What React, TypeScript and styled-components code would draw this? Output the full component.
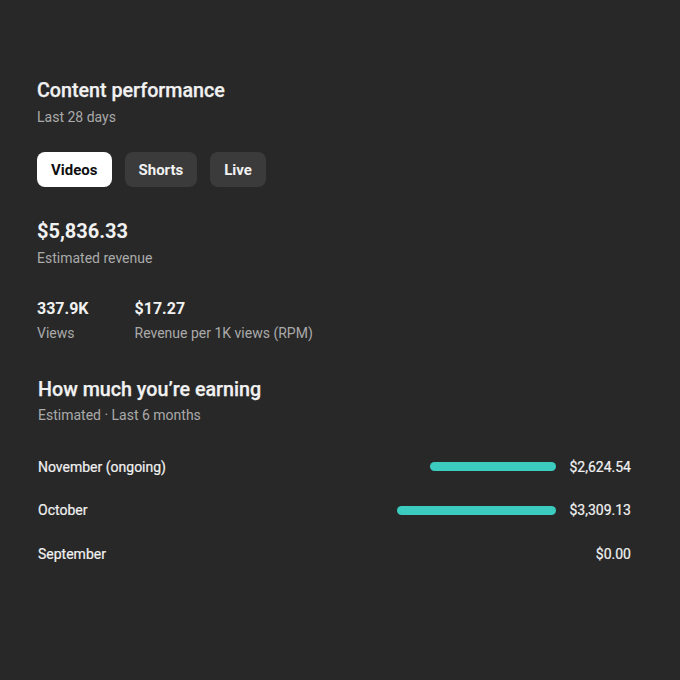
import React from 'react';
import styled, { createGlobalStyle } from 'styled-components';

const GlobalStyle = createGlobalStyle`
  html, body {
    margin: 0;
    padding: 0;
    background: #282828;
  }
  body {
    font-family: Roboto, "Noto Sans", Arial, sans-serif;
    color: #f1f1f1;
  }
`;

type Month = {
  label: string;
  amount: number;
};

const months: Month[] = [
  { label: 'November (ongoing)', amount: 2624.54 },
  { label: 'October', amount: 3309.13 },
  { label: 'September', amount: 0 },
];

const BAR_MAX = 159;

const money = (n: number) =>
  '$' + n.toLocaleString('en-US', { minimumFractionDigits: 2, maximumFractionDigits: 2 });

function App() {
  const [tab, setTab] = React.useState('Videos');
  const top = Math.max(...months.map((m) => m.amount));

  return (
    <>
      <GlobalStyle />
      <Page>
        <Section>
          <Title>Content performance</Title>
          <Sub>Last 28 days</Sub>
        </Section>

        <Chips>
          {['Videos', 'Shorts', 'Live'].map((t) => (
            <Chip key={t} $active={tab === t} onClick={() => setTab(t)}>
              {t}
            </Chip>
          ))}
        </Chips>

        <Revenue>
          <BigValue>$5,836.33</BigValue>
          <Sub>Estimated revenue</Sub>
        </Revenue>

        <Stats>
          <Stat>
            <StatValue>337.9K</StatValue>
            <Sub>Views</Sub>
          </Stat>
          <Stat>
            <StatValue>$17.27</StatValue>
            <Sub>Revenue per 1K views (RPM)</Sub>
          </Stat>
        </Stats>

        <Earning>
          <Title>How much you’re earning</Title>
          <Sub>Estimated · Last 6 months</Sub>
        </Earning>

        <Rows>
          {months.map((m) => (
            <Row key={m.label}>
              <RowLabel>{m.label}</RowLabel>
              <BarTrack>
                {m.amount > 0 && <Bar style={{ width: (m.amount / top) * BAR_MAX }} />}
              </BarTrack>
              <Amount>{money(m.amount)}</Amount>
            </Row>
          ))}
        </Rows>
      </Page>
    </>
  );
}

export default App;

const Page = styled.div`
  width: 680px;
  height: 680px;
  box-sizing: border-box;
  padding: 78px 49px 0 37px;
  display: flex;
  flex-direction: column;
`;

const Section = styled.div`
  display: flex;
  flex-direction: column;
  gap: 3px;
`;

const Title = styled.div`
  font-size: 19.7px;
  line-height: 26px;
  font-weight: 500;
  color: #f1f1f1;
  -webkit-text-stroke: 0.25px #f1f1f1;
`;

const Sub = styled.div`
  font-size: 14px;
  line-height: 20px;
  color: #aaaaaa;
`;

const Chips = styled.div`
  display: flex;
  gap: 13px;
  margin-top: 25px;
`;

const Chip = styled.button<{ $active: boolean }>`
  height: 35px;
  padding: 0 14px;
  border: none;
  border-radius: 8px;
  font-family: inherit;
  font-size: 15px;
  font-weight: 700;
  cursor: pointer;
  background: ${(p) => (p.$active ? '#ffffff' : '#3b3b3b')};
  color: ${(p) => (p.$active ? '#0f0f0f' : '#f1f1f1')};
`;

const Revenue = styled.div`
  display: flex;
  flex-direction: column;
  gap: 4px;
  margin-top: 31px;
`;

const BigValue = styled.div`
  font-size: 20px;
  line-height: 26px;
  font-weight: 700;
`;

const Stats = styled.div`
  display: flex;
  gap: 46px;
  margin-top: 30px;
`;

const Stat = styled.div`
  display: flex;
  flex-direction: column;
  gap: 3px;
`;

const StatValue = styled.div`
  font-size: 16px;
  line-height: 22px;
  font-weight: 700;
`;

const Earning = styled(Section)`
  margin-top: 34px;
  padding-left: 1px;
  gap: 2px;
`;

const Rows = styled.div`
  display: flex;
  flex-direction: column;
  margin-top: 20px;
  padding-left: 1px;
`;

const Row = styled.div`
  display: flex;
  align-items: center;
  height: 43.5px;
  font-size: 14px;
  color: #f1f1f1;
  -webkit-text-stroke: 0.2px #f1f1f1;
`;

const RowLabel = styled.div`
  flex: 1;
`;

const BarTrack = styled.div`
  display: flex;
  justify-content: flex-end;
  width: ${BAR_MAX}px;
`;

const Bar = styled.div`
  height: 9px;
  border-radius: 5px;
  background: #3ccbbf;
`;

const Amount = styled.div`
  min-width: 62px;
  margin-left: 13px;
  text-align: right;
`;
